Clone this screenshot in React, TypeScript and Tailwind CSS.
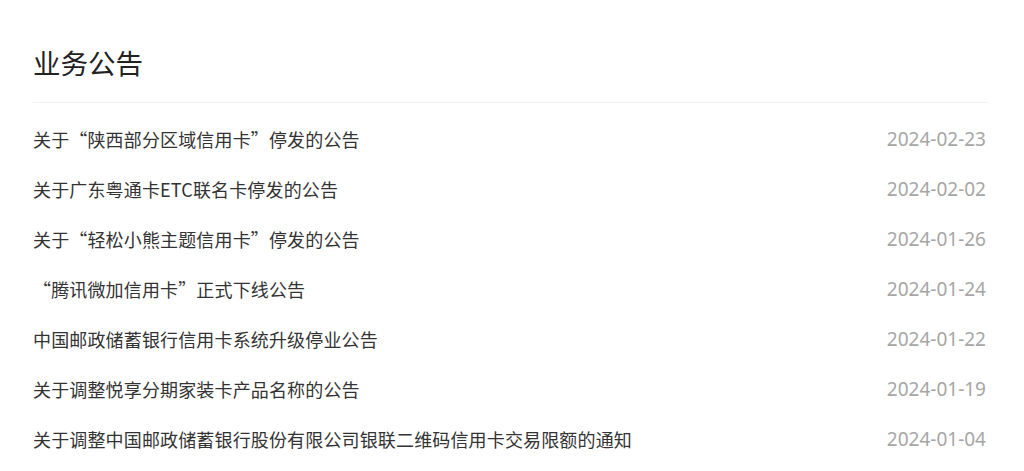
const NOTICES = [
  { title: "关于“陕西部分区域信用卡”停发的公告", date: "2024-02-23" },
  { title: "关于广东粤通卡ETC联名卡停发的公告", date: "2024-02-02" },
  { title: "关于“轻松小熊主题信用卡”停发的公告", date: "2024-01-26" },
  { title: "“腾讯微加信用卡”正式下线公告", date: "2024-01-24" },
  { title: "中国邮政储蓄银行信用卡系统升级停业公告", date: "2024-01-22" },
  { title: "关于调整悦享分期家装卡产品名称的公告", date: "2024-01-19" },
  {
    title: "关于调整中国邮政储蓄银行股份有限公司银联二维码信用卡交易限额的通知",
    date: "2024-01-04",
  },
];

export default function App() {
  return (
    <div
      lang="zh-CN"
      className="min-h-screen bg-white font-['Noto_Sans_CJK_SC','Microsoft_YaHei',sans-serif]"
    >
      <div className="ml-[33px] w-[955px]">
        {/* Header */}
        <h2 className="border-b border-[#f2f2f2] pt-[42px] pb-[20px] text-[27.5px] leading-[40px] font-normal text-[#222]">
          业务公告
        </h2>

        {/* List */}
        <ul className="mt-[11px]">
          {NOTICES.map((n, i) => (
            <li
              key={i}
              className="flex h-[50px] items-center justify-between text-[18px]"
            >
              <span className="tracking-[0.15px] text-[#333]">{n.title}</span>
              <span className="pr-[2px] font-['Noto_Sans',sans-serif] text-[19px] text-[#a6a6a6]">
                {n.date}
              </span>
            </li>
          ))}
        </ul>
      </div>
    </div>
  );
}
